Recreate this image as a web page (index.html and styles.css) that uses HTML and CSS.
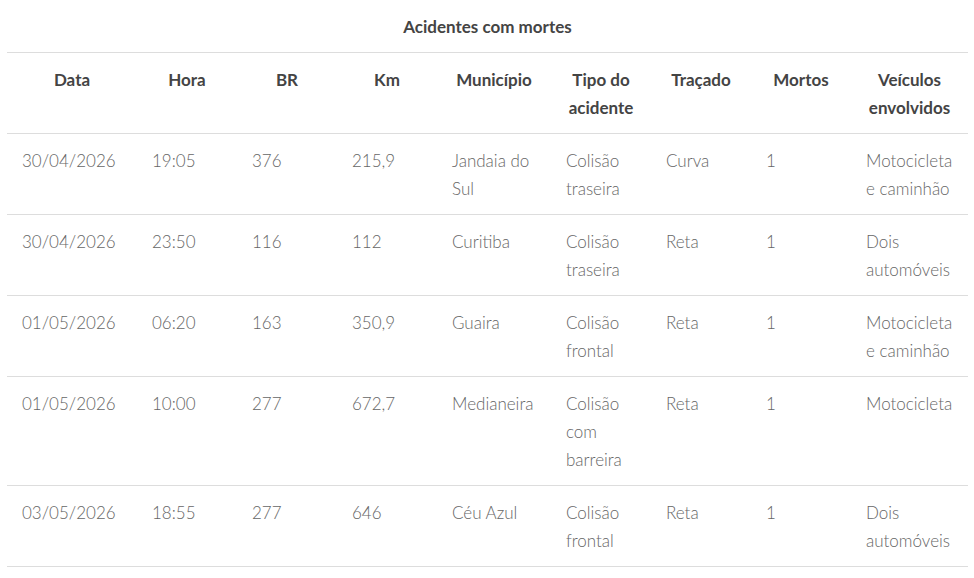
FILE: index.html
```html
<!DOCTYPE html>
<html lang="pt-BR">
<head>
<meta charset="utf-8">
<title>Acidentes com mortes</title>
<link rel="stylesheet" href="styles.css">
</head>
<body>
<div class="wrap">
<table class="acc">
  <caption>Acidentes com mortes</caption>
  <colgroup>
    <col class="c-data"><col class="c-n"><col class="c-n"><col class="c-n"><col class="c-mun"><col class="c-n"><col class="c-n"><col class="c-n"><col class="c-vei">
  </colgroup>
  <thead>
    <tr><th>Data</th><th>Hora</th><th>BR</th><th>Km</th><th>Município</th><th>Tipo do acidente</th><th>Traçado</th><th>Mortos</th><th>Veículos envolvidos</th></tr>
  </thead>
  <tbody>
    <tr><td>30/04/2026</td><td>19:05</td><td>376</td><td>215,9</td><td>Jandaia do Sul</td><td>Colisão traseira</td><td>Curva</td><td>1</td><td>Motocicleta e caminhão</td></tr>
    <tr><td>30/04/2026</td><td>23:50</td><td>116</td><td>112</td><td>Curitiba</td><td>Colisão traseira</td><td>Reta</td><td>1</td><td>Dois automóveis</td></tr>
    <tr><td>01/05/2026</td><td>06:20</td><td>163</td><td>350,9</td><td>Guaira</td><td>Colisão frontal</td><td>Reta</td><td>1</td><td>Motocicleta e caminhão</td></tr>
    <tr><td>01/05/2026</td><td>10:00</td><td>277</td><td>672,7</td><td>Medianeira</td><td>Colisão com barreira</td><td>Reta</td><td>1</td><td>Motocicleta</td></tr>
    <tr><td>03/05/2026</td><td>18:55</td><td>277</td><td>646</td><td>Céu Azul</td><td>Colisão frontal</td><td>Reta</td><td>1</td><td>Dois automóveis</td></tr>
  </tbody>
</table>
</div>
</body>
</html>
```
FILE: styles.css
```css
html, body {
  margin: 0;
  padding: 0;
  background: #fff;
}
body {
  font-family: "Lato", "Open Sans", "Liberation Sans", sans-serif;
  font-size: 17px;
  line-height: 28px;
  color: #666;
}
.wrap {
  padding: 0 6px 0 7px;
}
.acc {
  width: 961px;
  border-collapse: collapse;
  table-layout: fixed;
}
.acc caption {
  padding: 13px 0 11px;
  font-weight: 700;
  color: #444;
  text-align: center;
}
.c-data { width: 130px; }
.c-n { width: 100px; }
.c-mun { width: 114px; }
.c-vei { width: 117px; }
.acc th,
.acc td {
  padding: 13px 15px 11px;
  border-top: 1px solid #ddd;
  border-bottom: 1px solid #ddd;
  vertical-align: top;
}
.acc th {
  font-weight: 700;
  color: #444;
  text-align: center;
}
.acc td {
  font-weight: 300;
  text-align: left;
}
```
